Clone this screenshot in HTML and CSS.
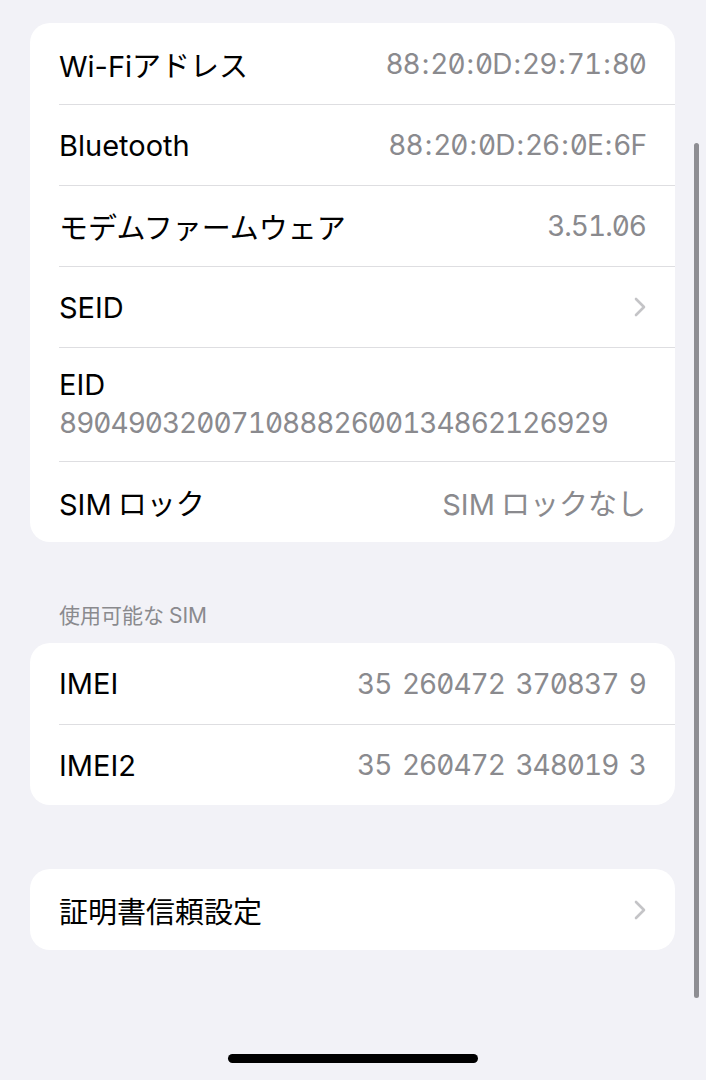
FILE: index.html
```html
<!DOCTYPE html>
<html lang="ja">
<head>
<meta charset="utf-8">
<title>情報</title>
<link rel="stylesheet" href="styles.css">
</head>
<body>
<main class="page">
  <section class="card">
    <div class="row"><span class="label">Wi-Fiアドレス</span><span class="value num">88<span class="colon">:</span>20<span class="colon">:</span>0D<span class="colon">:</span>29<span class="colon">:</span>71<span class="colon">:</span>80</span></div>
    <div class="row"><span class="label">Bluetooth</span><span class="value num">88<span class="colon">:</span>20<span class="colon">:</span>0D<span class="colon">:</span>26<span class="colon">:</span>0E<span class="colon">:</span>6F</span></div>
    <div class="row"><span class="label">モデムファームウェア</span><span class="value num">3.51.06</span></div>
    <div class="row"><span class="label">SEID</span><svg class="chev" width="12" height="20" viewBox="0 0 12 20"><path d="M2 2 L10 10 L2 18" fill="none" stroke="#c4c4c7" stroke-width="2.6" stroke-linecap="round" stroke-linejoin="round"/></svg></div>
    <div class="row row-tall"><span class="label">EID</span><span class="value num">89049032007108882600134862126929</span></div>
    <div class="row"><span class="label">SIM ロック</span><span class="value">SIM ロックなし</span></div>
  </section>

  <h2 class="section-title">使用可能な SIM</h2>
  <section class="card">
    <div class="row"><span class="label">IMEI</span><span class="value num">35 260472 370837 9</span></div>
    <div class="row"><span class="label">IMEI2</span><span class="value num">35 260472 348019 3</span></div>
  </section>

  <section class="card card-gap">
    <div class="row"><span class="label">証明書信頼設定</span><svg class="chev" width="12" height="20" viewBox="0 0 12 20"><path d="M2 2 L10 10 L2 18" fill="none" stroke="#c4c4c7" stroke-width="2.6" stroke-linecap="round" stroke-linejoin="round"/></svg></div>
  </section>
</main>
<div class="scrollbar"></div>
<div class="home-indicator"></div>
</body>
</html>
```

FILE: styles.css
```css
html, body {
  margin: 0;
  padding: 0;
  background: #f2f2f7;
}
body {
  width: 706px;
  height: 1080px;
  overflow: hidden;
  font-family: "Inter", "Noto Sans CJK JP", sans-serif;
  color: #000;
}
.page {
  padding: 23px 31px 0 30px;
}
.card {
  background: #fff;
  border-radius: 20px;
  overflow: hidden;
}
.card-gap {
  margin-top: 64px;
}
.row {
  box-sizing: border-box;
  height: 81px;
  margin-left: 29px;
  padding-right: 29px;
  display: flex;
  align-items: center;
  justify-content: space-between;
}
.row + .row {
  border-top: 1px solid #dedee1;
}
.row-tall {
  height: 114px;
  flex-direction: column;
  align-items: flex-start;
  justify-content: center;
  gap: 4px;
}
.label {
  font-size: 29px;
  word-spacing: -2px;
}
.value {
  font-size: 29px;
  color: #8a8a8e;
  word-spacing: -2px;
}
.value.num {
  font-size: 28px;
  font-feature-settings: "tnum" 1, "zero" 1;
  letter-spacing: -1px;
  word-spacing: 4px;
}
.colon {
  padding: 0 2px;
}
.row-tall .label {
  line-height: 34px;
  margin-top: -2px;
}
.row-tall .value {
  line-height: 34px;
}
.chev {
  display: block;
}
.section-title {
  margin: 61px 0 14px 29px;
  font-size: 21px;
  line-height: 26px;
  font-weight: 400;
  color: #8a8a8e;
  word-spacing: -1px;
}
.scrollbar {
  position: absolute;
  left: 694px;
  top: 143px;
  width: 5px;
  height: 855px;
  border-radius: 3px;
  background: #8e8e93;
}
.home-indicator {
  position: absolute;
  left: 228px;
  top: 1054px;
  width: 250px;
  height: 9px;
  border-radius: 5px;
  background: #000;
}
```
